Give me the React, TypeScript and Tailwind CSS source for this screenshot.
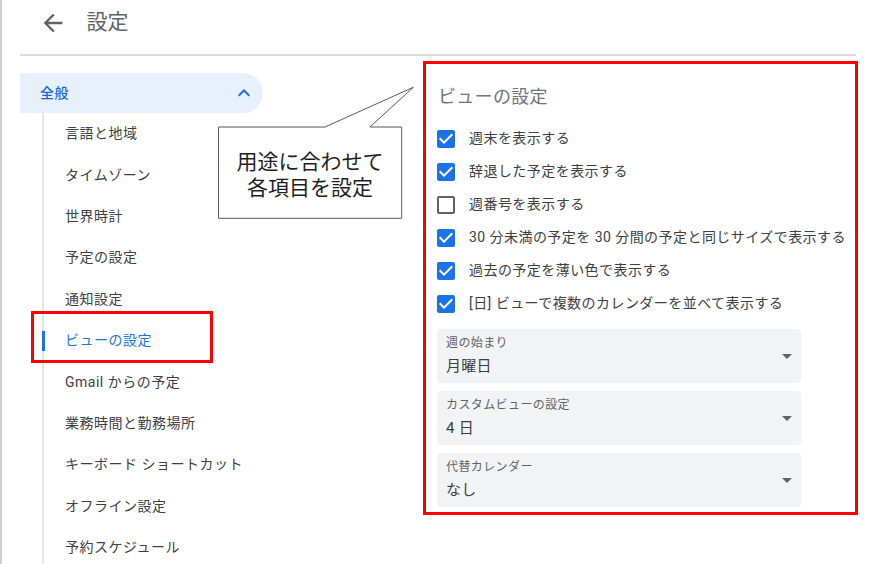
import React from "react";

const navItems = [
  "言語と地域",
  "タイムゾーン",
  "世界時計",
  "予定の設定",
  "通知設定",
  "ビューの設定",
  "Gmail からの予定",
  "業務時間と勤務場所",
  "キーボード ショートカット",
  "オフライン設定",
  "予約スケジュール",
];

const options = [
  { label: "週末を表示する", checked: true },
  { label: "辞退した予定を表示する", checked: true },
  { label: "週番号を表示する", checked: false },
  { label: "30 分未満の予定を 30 分間の予定と同じサイズで表示する", checked: true },
  { label: "過去の予定を薄い色で表示する", checked: true },
  { label: "[日] ビューで複数のカレンダーを並べて表示する", checked: true },
];

const selects = [
  { label: "週の始まり", value: "月曜日" },
  { label: "カスタムビューの設定", value: "4 日" },
  { label: "代替カレンダー", value: "なし" },
];

function Checkbox({ checked }: { checked: boolean }) {
  if (!checked) {
    return <span className="block h-[18px] w-[18px] shrink-0 rounded-[2px] border-2 border-[#5f6368]" />;
  }
  return (
    <span className="flex h-[18px] w-[18px] shrink-0 items-center justify-center rounded-[2px] bg-[#1a73e8]">
      <svg viewBox="3 3 18 18" className="h-[18px] w-[18px]" fill="#fff">
        <path d="M10 17l-5-5 1.41-1.41L10 14.17l7.59-7.59L19 8l-9 9z" />
      </svg>
    </span>
  );
}

function SelectField({ label, value }: { label: string; value: string }) {
  return (
    <div className="flex h-[54px] w-[364px] items-center justify-between rounded-[4px] bg-[#f1f3f4] pl-[9px] pr-[2px]">
      <div className="flex flex-col self-start pt-[6px]">
        <span className="text-[12px] leading-4 tracking-[0.4px] text-[#5f6368]">{label}</span>
        <span className="mt-[5px] text-[15px] leading-5 tracking-[0.3px] text-[#3c4043]">{value}</span>
      </div>
      <svg viewBox="0 0 24 24" className="h-6 w-6" fill="#5f6368">
        <path d="M7 10l5 5 5-5z" />
      </svg>
    </div>
  );
}

export default function App() {
  return (
    <div className="relative h-[564px] w-[881px] overflow-hidden border-l-2 border-[#cfcfcf] bg-white font-[family-name:Roboto,'Noto_Sans_CJK_JP',sans-serif]">
      <header className="flex h-[45px] items-center pl-[36.5px]">
        <svg viewBox="0 0 24 24" className="h-[28px] w-[28px]" fill="#5f6368">
          <path d="M20 11H7.83l5.59-5.59L12 4l-8 8 8 8 1.41-1.41L7.83 13H20v-2z" />
        </svg>
        <h1 className="ml-[20px] text-[21px] leading-none text-[#5f6368]">設定</h1>
      </header>
      <div className="ml-[18px] mt-[8.5px] h-[2px] w-[836px] bg-[#dadce0]" />

      <div className="flex items-start">
        <nav className="ml-[18px] mt-[17.5px] w-[243px]">
          <div className="flex h-10 items-center justify-between rounded-r-full bg-[#e8f0fe] pl-[20px] pr-[7px]">
            <span className="text-[14px] font-medium tracking-[0.4px] text-[#1967d2]">全般</span>
            <svg viewBox="0 0 24 24" className="h-6 w-6" fill="#1967d2">
              <path d="M12 8l-6 6 1.41 1.41L12 10.83l4.59 4.58L18 14z" />
            </svg>
          </div>
          <ul className="ml-[22px] border-l-2 border-[#e3e5e8]">
            {navItems.map((item) => {
              const active = item === "ビューの設定";
              return (
                <li
                  key={item}
                  className={`relative flex h-[41.4px] items-center pl-[21px] text-[14px] tracking-[0.5px] ${
                    active ? "text-[#1a73e8]" : "text-[#3c4043]"
                  }`}
                >
                  {active ? (
                    <>
                      <span className="absolute -left-[2.5px] top-[11px] h-[20px] w-[3px] bg-[#1a73e8]" />
                      <span className="absolute -left-[13px] -top-[9px] h-[52px] w-[182px] border-[3px] border-[#ff0000]" />
                    </>
                  ) : null}
                  {item}
                </li>
              );
            })}
          </ul>
        </nav>

        <section className="ml-[160px] mt-[5.5px] h-[454px] w-[435px] border-[3px] border-[#ff0000] pl-[11px] pt-[20.5px]">
          <h2 className="pl-[1px] text-[18px] leading-6 tracking-[0.3px] text-[#70757a]">ビューの設定</h2>
          <div className="mt-[13.5px] flex flex-col">
            {options.map((o) => (
              <label
                key={o.label}
                className="flex h-[33px] items-center gap-[14px] text-[14px] tracking-[0.45px] text-[#3c4043]"
              >
                <Checkbox checked={o.checked} />
                <span>{o.label}</span>
              </label>
            ))}
          </div>
          <div className="mt-[8.5px] flex flex-col gap-2">
            {selects.map((s) => (
              <SelectField key={s.label} label={s.label} value={s.value} />
            ))}
          </div>
        </section>
      </div>

      <svg className="absolute left-[208px] top-[80px] h-[145px] w-[210px]" viewBox="0 0 210 145">
        <path
          d="M8.5 47 H115 L203.3 7.3 L160 47 H191.7 V138.3 H8.5 Z"
          fill="#fff"
          stroke="#595959"
          strokeWidth="1"
        />
      </svg>
      <div className="absolute left-[216.5px] top-[127px] flex h-[91px] w-[183px] flex-col items-center justify-center font-[family-name:'Noto_Sans_CJK_JP',sans-serif] text-[21px] leading-[26px] text-[#1f1f1f]">
        <span>用途に合わせて</span>
        <span>各項目を設定</span>
      </div>
    </div>
  );
}
